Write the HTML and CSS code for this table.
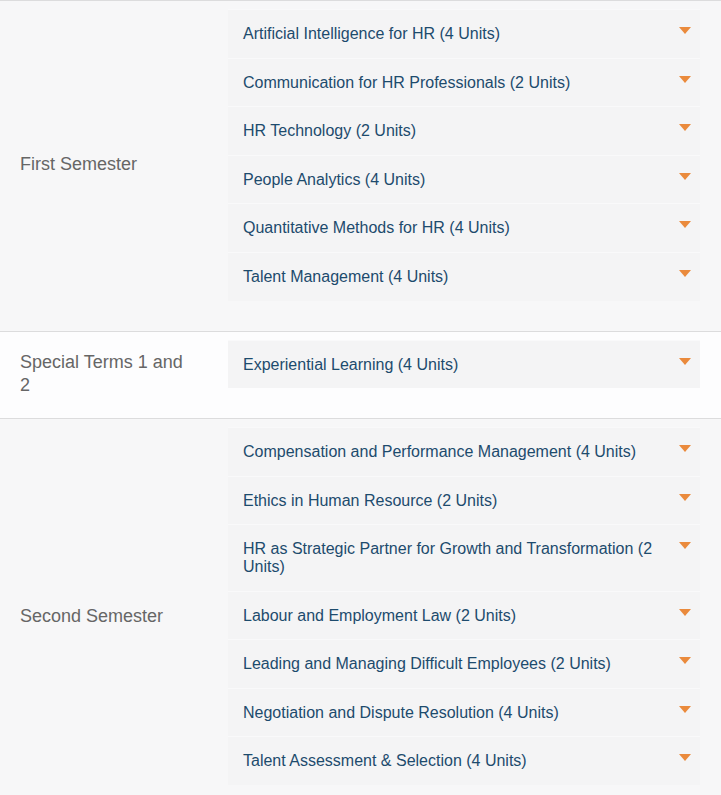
FILE: index.html
```html
<!DOCTYPE html>
<html lang="en">
<head>
<meta charset="utf-8">
<title>Courses</title>
<link rel="stylesheet" href="styles.css">
</head>
<body>
<div class="terms">
  <section class="term term-shaded">
    <div class="term-label">First Semester</div>
    <ul class="course-list">
      <li class="course"><span class="course-name">Artificial Intelligence for HR (4 Units)</span><span class="caret"></span></li>
      <li class="course"><span class="course-name">Communication for HR Professionals (2 Units)</span><span class="caret"></span></li>
      <li class="course"><span class="course-name">HR Technology (2 Units)</span><span class="caret"></span></li>
      <li class="course"><span class="course-name">People Analytics (4 Units)</span><span class="caret"></span></li>
      <li class="course"><span class="course-name">Quantitative Methods for HR (4 Units)</span><span class="caret"></span></li>
      <li class="course"><span class="course-name">Talent Management (4 Units)</span><span class="caret"></span></li>
    </ul>
  </section>
  <section class="term term-white">
    <div class="term-label">Special Terms 1 and 2</div>
    <ul class="course-list">
      <li class="course"><span class="course-name">Experiential Learning (4 Units)</span><span class="caret"></span></li>
    </ul>
  </section>
  <section class="term term-shaded">
    <div class="term-label">Second Semester</div>
    <ul class="course-list">
      <li class="course"><span class="course-name">Compensation and Performance Management (4 Units)</span><span class="caret"></span></li>
      <li class="course"><span class="course-name">Ethics in Human Resource (2 Units)</span><span class="caret"></span></li>
      <li class="course"><span class="course-name">HR as Strategic Partner for Growth and Transformation (2 Units)</span><span class="caret"></span></li>
      <li class="course"><span class="course-name">Labour and Employment Law (2 Units)</span><span class="caret"></span></li>
      <li class="course"><span class="course-name">Leading and Managing Difficult Employees (2 Units)</span><span class="caret"></span></li>
      <li class="course"><span class="course-name">Negotiation and Dispute Resolution (4 Units)</span><span class="caret"></span></li>
      <li class="course"><span class="course-name">Talent Assessment &amp; Selection (4 Units)</span><span class="caret"></span></li>
    </ul>
  </section>
</div>
</body>
</html>
```

FILE: styles.css
```css
html, body {
  margin: 0;
  padding: 0;
  background: #f7f7f8;
  font-family: "Liberation Sans", Arial, sans-serif;
}

.terms {
  display: flex;
  flex-direction: column;
}

.term {
  display: grid;
  grid-template-columns: 228px 1fr;
  padding: 0 21px 0 0;
  border-top: 1px solid #dcdcdd;
}

.term-shaded {
  background: #f7f7f8;
}

.term-white {
  background: #fdfdfe;
}

.term-label {
  align-self: center;
  padding-left: 20px;
  width: 170px;
  font-size: 18px;
  line-height: 23px;
  color: #666;
  margin-top: -2px;
}

.course-list {
  list-style: none;
  margin: 0;
  padding: 8px 0 30px;
  display: flex;
  flex-direction: column;
}

.course {
  display: flex;
  justify-content: space-between;
  align-items: flex-start;
  gap: 20px;
  background: #f4f4f5;
  border-top: 1px solid #f9f9fa;
  padding: 15px 9px 15px 15px;
}

.course-name {
  font-size: 16px;
  line-height: 17.6px;
  color: #1d4b6d;
}

.caret {
  flex: none;
  margin-top: 2px;
  width: 0;
  height: 0;
  border-left: 6px solid transparent;
  border-right: 6px solid transparent;
  border-top: 7px solid #ea8a3c;
}
```
